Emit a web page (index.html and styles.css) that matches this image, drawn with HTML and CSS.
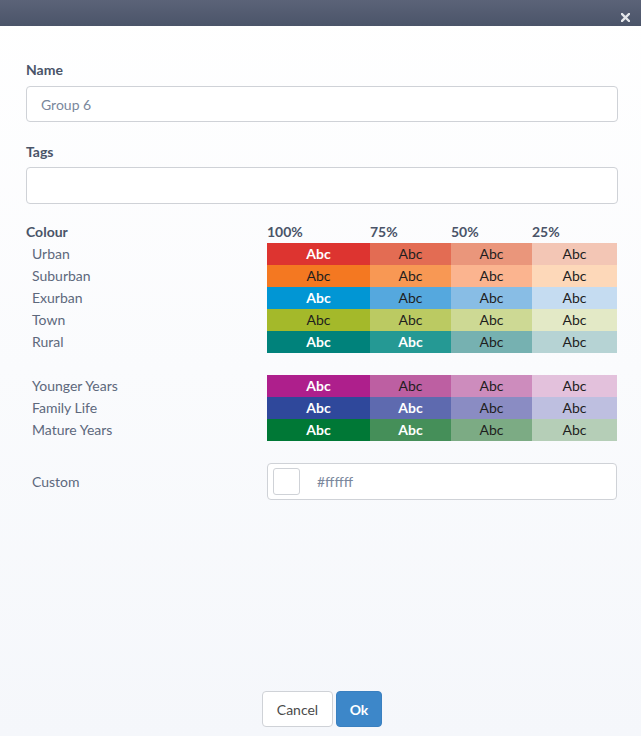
FILE: index.html
```html
<!DOCTYPE html>
<html>
<head>
<meta charset="utf-8">
<link rel="stylesheet" href="styles.css">
</head>
<body>
<div class="dialog">
  <div class="titlebar">
    <svg class="close" width="9" height="9" viewBox="0 0 9 9"><path d="M1 1 L8 8 M8 1 L1 8" stroke="#e4e6ea" stroke-width="2.4" stroke-linecap="square"/></svg>
  </div>
  <div class="content">
    <div class="label">Name</div>
    <div class="input"><span class="value">Group 6</span></div>
    <div class="label tags-label">Tags</div>
    <div class="input tall"></div>

    <div class="grid head">
      <div class="hcell first">Colour</div>
      <div class="hcell">100%</div>
      <div class="hcell">75%</div>
      <div class="hcell">50%</div>
      <div class="hcell">25%</div>
    </div>
    <div class="grid">
      <div class="rlabel">Urban</div>
      <div class="sw w" style="background:#dd3430">Abc</div>
      <div class="sw" style="background:#e36c53">Abc</div>
      <div class="sw" style="background:#ea967b">Abc</div>
      <div class="sw" style="background:#f3c6b5">Abc</div>

      <div class="rlabel">Suburban</div>
      <div class="sw" style="background:#f47821">Abc</div>
      <div class="sw" style="background:#f89854">Abc</div>
      <div class="sw" style="background:#fbb48f">Abc</div>
      <div class="sw" style="background:#fdd8b9">Abc</div>

      <div class="rlabel">Exurban</div>
      <div class="sw w" style="background:#0196d4">Abc</div>
      <div class="sw" style="background:#55a8de">Abc</div>
      <div class="sw" style="background:#88bde5">Abc</div>
      <div class="sw" style="background:#c5dcf1">Abc</div>

      <div class="rlabel">Town</div>
      <div class="sw" style="background:#a4b92a">Abc</div>
      <div class="sw" style="background:#bbca62">Abc</div>
      <div class="sw" style="background:#cdd994">Abc</div>
      <div class="sw" style="background:#e3e9c6">Abc</div>

      <div class="rlabel">Rural</div>
      <div class="sw w" style="background:#00827b">Abc</div>
      <div class="sw w" style="background:#259994">Abc</div>
      <div class="sw" style="background:#76b1b1">Abc</div>
      <div class="sw" style="background:#b6d3d4">Abc</div>
    </div>

    <div class="grid group2">
      <div class="rlabel">Younger Years</div>
      <div class="sw w" style="background:#ae1f8c">Abc</div>
      <div class="sw" style="background:#bd5fa2">Abc</div>
      <div class="sw" style="background:#cd8cbd">Abc</div>
      <div class="sw" style="background:#e3c1dc">Abc</div>

      <div class="rlabel">Family Life</div>
      <div class="sw w" style="background:#2f489b">Abc</div>
      <div class="sw w" style="background:#5e6aaf">Abc</div>
      <div class="sw" style="background:#8a8cc3">Abc</div>
      <div class="sw" style="background:#bebfe0">Abc</div>

      <div class="rlabel">Mature Years</div>
      <div class="sw w" style="background:#007836">Abc</div>
      <div class="sw w" style="background:#458f59">Abc</div>
      <div class="sw" style="background:#7cab84">Abc</div>
      <div class="sw" style="background:#b5ceb7">Abc</div>
    </div>

    <div class="custom">
      <div class="rlabel custom-label">Custom</div>
      <div class="custom-input">
        <div class="chip"></div>
        <span class="hex">#ffffff</span>
      </div>
    </div>
  </div>
  <div class="footer">
    <button class="btn cancel">Cancel</button>
    <button class="btn ok">Ok</button>
  </div>
</div>
</body>
</html>
```
FILE: styles.css
```css
html, body {
  margin: 0;
  padding: 0;
}
body {
  font-family: Lato, "Open Sans", sans-serif;
  font-size: 14px;
  color: #4c566a;
}
.dialog {
  width: 641px;
  height: 736px;
  display: flex;
  flex-direction: column;
  background: linear-gradient(#ffffff, #f5f7fb);
}
.titlebar {
  height: 26px;
  flex: none;
  background: linear-gradient(#5b6378, #4b5469);
  position: relative;
}
.close {
  position: absolute;
  right: 11px;
  top: 13px;
}
.content {
  flex: 1;
  padding: 34px 23px 0 26px;
}
.label {
  font-weight: bold;
  color: #4a5468;
  line-height: 20px;
  height: 20px;
  margin-bottom: 6px;
}
.tags-label {
  margin-top: 20px;
  margin-bottom: 5px;
}
.input {
  height: 34px;
  border: 1px solid #cfd2d7;
  border-radius: 4px;
  background: #fff;
  display: flex;
  align-items: center;
  padding-left: 14px;
}
.input.tall {
  height: 35px;
}
.value {
  color: #7a879c;
}
.grid {
  display: grid;
  grid-template-columns: 241px 103px 81px 81px 85px;
  grid-auto-rows: 22px;
}
.head {
  margin-top: 17px;
}
.hcell {
  font-weight: bold;
  color: #4a5468;
  line-height: 22px;
}
.rlabel {
  padding-left: 6px;
  line-height: 22px;
  color: #5d687c;
}
.sw {
  text-align: center;
  line-height: 22px;
  color: #1e1e1e;
  font-size: 14px;
}
.sw.w {
  color: #fff;
  font-weight: bold;
}
.group2 {
  margin-top: 22px;
}
.custom {
  margin-top: 22px;
  display: grid;
  grid-template-columns: 241px 350px;
}
.custom-label {
  line-height: 37px;
}
.custom-input {
  height: 35px;
  border: 1px solid #cfd2d7;
  border-radius: 4px;
  background: #fff;
  display: flex;
  align-items: center;
  padding-left: 5px;
}
.chip {
  width: 25px;
  height: 25px;
  border: 1px solid #cfd2d7;
  border-radius: 3px;
  background: #fff;
}
.hex {
  margin-left: 17px;
  color: #7a879c;
}
.footer {
  flex: none;
  display: flex;
  justify-content: center;
  gap: 3px;
  padding-bottom: 9px;
  padding-left: 3px;
}
.btn {
  height: 36px;
  font-family: inherit;
  font-size: 14px;
  border-radius: 4px;
  padding: 0;
}
.cancel {
  width: 71px;
  background: #fff;
  border: 1px solid #cfd2d7;
  color: #4a4a4a;
}
.ok {
  width: 46px;
  background: #3d87c9;
  border: 1px solid #3a80c0;
  color: #fff;
  font-weight: bold;
}
```
